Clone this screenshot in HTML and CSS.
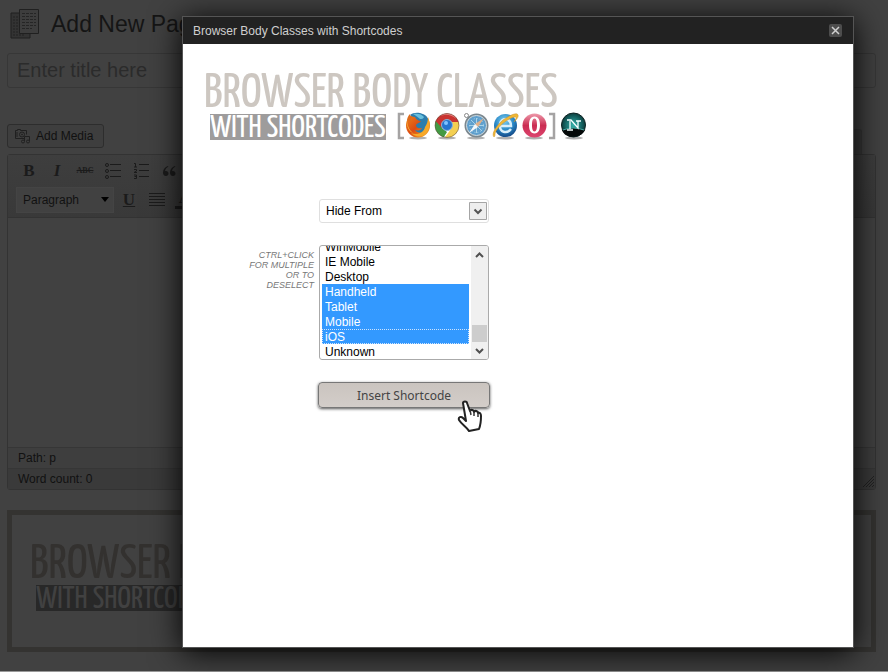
FILE: index.html
```html
<!DOCTYPE html>
<html lang="en">
<head>
<meta charset="utf-8">
<title>Add New Page</title>
<link rel="stylesheet" href="styles.css">
</head>
<body>
<main class="page">
  <header class="page-head">
    <svg width="30" height="32" viewBox="0 0 30 32" aria-hidden="true">
      <path d="M1 5h19v25H1z" fill="#333" stroke="#202020"/>
      <path d="M3 9h5M3 12h5M3 15h5M3 18h5M3 21h5M3 24h12M3 27h12" stroke="#222" stroke-dasharray="2 1"/>
      <path d="M9.500 1.500h19v24h-19z" fill="#3d3d3d" stroke="#202020"/>
      <path d="M12 5.500h14M12 8.500h14M12 11.500h14M12 14.500h14M12 17.500h14M12 20.500h10" stroke="#252525" stroke-dasharray="3 1"/>
    </svg>
    <h1>Add New Page</h1>
  </header>
  <input class="title-input" type="text" aria-label="Title" placeholder="Enter title here">
  <div class="media-row">
    <button class="media-btn" type="button">
      <svg width="16" height="16" viewBox="0 0 16 16" fill="none" stroke="#202020" aria-hidden="true">
        <path d="M9.500 10.500h-9v-8h2v-1h3v1h6v4"/><circle cx="7" cy="6.500" r="2.500"/><circle cx="7" cy="6.500" r=".5"/><path d="M2 4v5M9.500 13v-4.500h5V13"/><circle cx="8" cy="13.500" r="1.500"/><circle cx="13" cy="13.500" r="1.500"/>
      </svg>
      Add Media
    </button>
    <span class="tab"></span>
  </div>
  <section class="editor">
    <div class="toolbar">
      <div class="tools">
        <button class="tool serif" type="button">B</button>
        <button class="tool serif italic" type="button">I</button>
        <button class="tool strike" type="button">ABC</button>
        <button class="tool" type="button" aria-label="Bulleted list"><svg width="16" height="16" viewBox="0 0 16 16" fill="none" stroke="#1b1b1b"><circle cx="2" cy="2" r="1.500"/><circle cx="2" cy="8" r="1.500"/><circle cx="2" cy="14" r="1.500"/><path d="M5 1.500h11M5 7.500h11M5 13.500h11"/></svg></button>
        <button class="tool" type="button" aria-label="Numbered list"><svg width="16" height="16" viewBox="0 0 16 16" fill="none" stroke="#1b1b1b"><path d="M1 .5h1.500V4M1 4h3M1 6.500h2.500v1.500L1 9.500h3M1 12h2.500v3.500H1M1.500 13.500h2M6 1.500h10M6 7.500h10M6 13.500h10"/></svg></button>
        <button class="tool" type="button" aria-label="Quote"><svg width="13" height="10" viewBox="0 0 13 10" fill="#1b1b1b"><path d="M5 0C2 1 0 3.500 0 6.500 0 8.500 1 10 3 10c1.500 0 2.500-1 2.500-2.500S4.500 5 3 5c-.4 0-.7 0-1 .2C2.300 3 3.500 1.500 5.300.7z"/><path d="M12 0C9 1 7 3.500 7 6.500 7 8.500 8 10 10 10c1.500 0 2.500-1 2.500-2.500S11.500 5 10 5c-.4 0-.7 0-1 .2.300-2.200 1.500-3.700 3.300-4.500z"/></svg></button>
      </div>
      <div class="tools">
        <button class="format" type="button">Paragraph<svg width="8" height="5" viewBox="0 0 8 5"><path d="M0 0h8L4 5z" fill="#000"/></svg></button>
        <button class="tool serif under" type="button">U</button>
        <button class="tool" type="button" aria-label="Justify"><svg width="16" height="14" viewBox="0 0 16 14" stroke="#1b1b1b"><path d="M0 .5h16M0 3.500h16M0 6.500h16M0 9.500h16M0 12.500h16"/></svg></button>
        <button class="tool serif color" type="button">A</button>
      </div>
    </div>
    <div class="canvas"></div>
    <div class="status">Path: p</div>
    <div class="status count">Word count: 0
      <svg width="12" height="12" viewBox="0 0 12 12" stroke="#222" aria-hidden="true"><path d="M1 12L12 1M4 12l8-8M7 12l5-5M10 12l2-2"/></svg>
    </div>
  </section>
  <section class="promo">
    <div class="logo logo-dark">
      <div class="logo-top">BROWSER BODY CLASSES</div>
      <div class="logo-row"><span class="logo-tag">WITH SHORTCODES</span></div>
    </div>
  </section>
  <div class="taskbar"></div>
</main>

<div class="modal" role="dialog" aria-labelledby="modal-title">
  <div class="modal-bar">
    <h2 id="modal-title">Browser Body Classes with Shortcodes</h2>
    <button class="close" type="button" aria-label="Close"><svg width="13" height="13" viewBox="0 0 13 13"><path d="M3 3l7 7M10 3l-7 7" stroke="#d0d0d0" stroke-width="1.500"/></svg></button>
  </div>
  <div class="modal-body">
    <div class="logo">
      <div class="logo-top">BROWSER BODY CLASSES</div>
      <div class="logo-row">
        <span class="logo-tag">WITH SHORTCODES</span>
        <svg class="browsers" width="192" height="30" viewBox="396 112 192 30" aria-hidden="true">
          <defs>
            <radialGradient id="blue" cx=".45" cy=".3" r=".7"><stop offset="0" stop-color="#7fd0f2"/><stop offset=".6" stop-color="#2685c4"/><stop offset="1" stop-color="#164b88"/></radialGradient>
            <linearGradient id="fox" x1="0" y1="0" x2="1" y2="1"><stop offset="0" stop-color="#ef8a1c"/><stop offset=".5" stop-color="#dc4b12"/><stop offset="1" stop-color="#f7b52b"/></linearGradient>
            <linearGradient id="red" x1="0" y1="0" x2="0" y2="1"><stop offset="0" stop-color="#ee9aab"/><stop offset=".5" stop-color="#cb2d52"/><stop offset="1" stop-color="#dd4570"/></linearGradient>
            <radialGradient id="teal" cx=".5" cy=".5" r=".6"><stop offset="0" stop-color="#35b3ac"/><stop offset=".6" stop-color="#14605f"/><stop offset="1" stop-color="#082525"/></radialGradient>
            <clipPath id="disc"><circle cx="447" cy="125.500" r="12"/></clipPath>
          </defs>
          <path d="M404 114h-5v24h5M549 114h5v24h-5" fill="none" stroke="#a5a3a3" stroke-width="2.500"/>
          <g fill="#000" opacity=".3"><ellipse cx="418" cy="138" rx="9" ry="1.500"/><ellipse cx="447" cy="138" rx="9" ry="1.500"/><ellipse cx="476" cy="138" rx="9" ry="1.500"/><ellipse cx="505" cy="138" rx="9" ry="1.500"/><ellipse cx="534" cy="138" rx="9" ry="1.500"/><ellipse cx="574" cy="138" rx="9" ry="1.500"/></g>
          <circle cx="418" cy="125.500" r="12" fill="url(#fox)"/>
          <path d="M410 115c5-4 14-2 17 2 3 5 2 11-1 14-4 3-9 2-11-1 4 1 6 0 7-2-4 1-6-1-6-3 1-2 4-2 5-4-3 0-5-2-6-4-2 0-4-1-5-2z" fill="#2c7dad"/>
          <path d="M413 114c4-1 9 0 11 3-1 2-2 2-4 2-2-2-4-3-7-5z" fill="#68c0dd"/>
          <path d="M428 117c3 7 2 15-5 19-5 1-9 0-12-3 7 3 13-1 14-6 2-3 3-6 3-10z" fill="#f7a928"/><path d="M407 120c0 5 2 10 6 13-4-1-7-8-6-13z" fill="#fbc544"/>
          <path d="M407 121c0-3 1-5 3-7 0 2 1 3 2 3-2 2-2 3-1 5-2-1-3-2-4-1z" fill="#dd6b1b"/>
          <g clip-path="url(#disc)"><path d="M434 112h26v14h-13l-7 3-6-8z" fill="#c93431"/><path d="M434 119l8 9 5 4-5 8h-8z" fill="#429a43"/><path d="M452 122h9v18h-18l8-11z" fill="#f3cf52"/><path d="M436 117q11-7 21 1" stroke="#eb8582" stroke-width="2" fill="none"/></g>
          <circle cx="447" cy="125.500" r="12" fill="none" stroke="#513a23" stroke-opacity=".5"/>
          <circle cx="447" cy="125" r="5.500" fill="#2675cf" stroke="#8fb4d5"/><circle cx="446" cy="123" r="2" fill="#7fc2ff"/>
          <circle cx="466.500" cy="115.500" r="2" fill="none" stroke="#888"/><circle cx="476.500" cy="125.500" r="11" fill="#5f9fcd" stroke="#7b878e" stroke-width="2"/><circle cx="476.500" cy="125.500" r="10" fill="none" stroke="#d0dbe0"/><circle cx="476.500" cy="125.500" r="7" fill="none" stroke="#a9d3e8" stroke-dasharray="1 2"/>
          <path d="M476.500 118v15M469 125.500h15M471 120l11 11" stroke="#a9d3e8"/><path d="M484 118l-6 9-3-3z" fill="#e0b089"/><path d="M469 133l6-9 3 3z" fill="#f5f7f9"/>
          <circle cx="505.500" cy="125.500" r="11.500" fill="url(#blue)"/>
          <path d="M500 126h11c0-8-10-9-11-2-1 9 7 10 11 5" fill="none" stroke="#d9effa" stroke-width="2.500"/>
          <path d="M494 137c-3-3 2-11 9-17 7-5 14-8 15-5 1 2-2 5-4 7 2-3 3-5 1-5-6 0-20 12-20 17 0 1 0 2-1 3z" fill="#f0b735" stroke="#c9902a" stroke-width=".5"/>
          <circle cx="534.500" cy="125.500" r="12" fill="url(#red)"/><path fill-rule="evenodd" d="M534.500 116.500c4 0 5.500 4 5.500 8.500s-1.500 8.500-5.500 8.500-5.500-4-5.500-8.500 1.500-8.500 5.500-8.500zm0 2c-2 0-2.500 3-2.500 6.500s.5 6.500 2.500 6.500 2.500-3 2.500-6.500-.5-6.500-2.500-6.500z" fill="#fff"/>
          <circle cx="573.500" cy="125" r="12" fill="url(#teal)" stroke="#102424"/><path d="M562 130q11-4 23 0c-3 8-20 10-23 0z" fill="#050909"/><path d="M563 130q10-4 21 0" fill="none" stroke="#4bb3ad"/>
          <path d="M567 120h4l7 8v-7h-2M578 121h3M570 121v8M567 130h6" fill="none" stroke="#f5ffff" stroke-width="1.300"/>
        </svg>
      </div>
    </div>
    <form class="form">
      <span></span>
      <div class="drop">
        <select aria-label="Visibility"><option>Hide From</option></select>
        <svg class="drop-arrow" width="18" height="18" viewBox="0 0 18 18" aria-hidden="true"><path d="M.5.5h17v17H.5z" fill="#eee" stroke="#a5a5a5"/><path d="M5.500 7.500L9 11l3.500-3.500" fill="none" stroke="#555" stroke-width="2"/></svg>
      </div>
      <label class="hint" for="targets">CTRL+CLICK<br>FOR MULTIPLE<br>OR TO<br>DESELECT</label>
      <div class="list">
        <select id="targets" multiple size="7">
          <option>WinMobile</option>
          <option>IE Mobile</option>
          <option>Desktop</option>
          <option selected>Handheld</option>
          <option selected>Tablet</option>
          <option selected>Mobile</option>
          <option selected class="current">iOS</option>
          <option>Unknown</option>
        </select>
        <div class="scroll" aria-hidden="true">
          <svg width="9" height="6" viewBox="0 0 9 6"><path d="M1 5l3.500-3.500L8 5" fill="none" stroke="#505050" stroke-width="2"/></svg>
          <span class="thumb"></span>
          <svg width="9" height="6" viewBox="0 0 9 6"><path d="M1 1l3.500 3.500L8 1" fill="none" stroke="#505050" stroke-width="2"/></svg>
        </div>
      </div>
      <span></span>
      <div class="submit">
        <button type="button">Insert Shortcode</button>
        <svg class="hand" width="26" height="32" viewBox="0 0 26 32" aria-hidden="true"><path d="M6 3c0-2 4-2 4 0l3 8c1-2 4-1 4 1 1-2 4-1 4 1 2-1 3 1 3 3 0 5 0 8-2 13l-10 2c-2-4-7-6-10-11-1-3 2-4 4-2l3 3z" fill="#fff" stroke="#222" stroke-width="2" stroke-linejoin="round"/><path d="M13 10l1 5M17 12v4M21 13v4" stroke="#333" stroke-width="1.500" fill="none"/></svg>
      </div>
    </form>
  </div>
</div>
<script src="list.js"></script>
</body>
</html>
```
FILE: styles.css
```css
* { box-sizing: border-box; }
body {
  margin: 0;
  background: #414141;
  color: #111;
  font: 12px/16px "Liberation Sans", Arial, sans-serif;
}
button, input, select { font: inherit; color: inherit; margin: 0; }
button { padding: 0; border: 0; background: none; }
.page { display: flex; flex-direction: column; min-height: 100vh; overflow: hidden; }
.page > * { margin-left: 7px; margin-right: 12px; }
.page-head { display: flex; align-items: center; gap: 11px; padding: 8px 3px 0; height: 40px; }
h1 { margin: 0; font-size: 23px; line-height: 32px; font-weight: 400; color: #151515; }
.title-input {
  margin-top: 13px;
  height: 35px;
  padding: 0 9px;
  border: 1px solid #373737;
  border-radius: 3px;
  background: #414141;
  font-size: 20px;
}
.title-input::placeholder { color: #2b2b2b; opacity: 1; }
.media-row { display: flex; justify-content: space-between; margin-top: 36px; height: 30px; padding-right: 14px; }
.media-btn {
  display: flex;
  align-items: center;
  gap: 5px;
  height: 24px;
  padding: 0 10px 0 7px;
  border: 1px solid #2d2d2d;
  border-radius: 3px;
  background: #3e3e3e;
}
.tab { width: 48px; margin-top: 5px; border: 1px solid #373737; border-bottom: 0; border-radius: 3px 3px 0 0; background: #3b3b3b; }
.editor { border: 1px solid #333; border-radius: 3px; }
.toolbar { height: 63px; padding: 1px 7px; border-bottom: 1px solid #333; background: linear-gradient(#3e3e3e, #393939); }
.tools { display: flex; align-items: center; height: 29px; }
.tool { display: flex; justify-content: center; align-items: center; flex: none; width: 28px; height: 24px; color: #1b1b1b; }
.serif { font: bold 17px/20px "Liberation Serif", serif; }
.italic { font-style: italic; }
.strike { font: bold 8px/10px "Liberation Serif", serif; text-decoration: line-through; }
.under { text-decoration: underline; }
.color { border-bottom: 3px solid #1b1b1b; width: 20px; margin-left: 4px; height: 18px; }
.format { display: flex; justify-content: space-between; align-items: center; flex: none; width: 98px; height: 26px; padding: 0 4px 0 6px; margin: 0 1px 0 1px; border: 1px solid #444; background: #414141; }
.canvas { height: 229px; }
.status { height: 21px; padding: 2px 10px; border-top: 1px solid #363636; background: #3e3e3e; }
.count { display: flex; justify-content: space-between; align-items: flex-start; padding-right: 1px; background: #3a3a3a; }
.count svg { align-self: flex-end; }
.promo { margin-top: 20px; height: 142px; padding: 30px 18px; border: 5px solid #343331; overflow: hidden; }
.page > .taskbar { margin: auto 0 0; height: 1px; background: #999; }

.logo { color: #cdc7c1; font-family: "Yanone Kaffeesatz", "Open Sans Condensed", "Roboto Condensed", "Liberation Sans Narrow", "Liberation Sans", sans-serif; white-space: nowrap; }
.logo-top { font-size: 49px; line-height: 40px; }
.logo-row { display: flex; align-items: center; gap: 10px; height: 26px; padding-left: 6px; }
.logo-tag { width: 176px; height: 26px; background: #9e9c9c; color: #fff; font-size: 32px; line-height: 28px; text-align: center; }
.logo-dark { color: #33312f; }
.logo-dark .logo-tag { background: #282828; color: #414141; }

.modal {
  position: absolute;
  left: 182px;
  right: 34px;
  top: 16px;
  bottom: 24px;
  display: flex;
  flex-direction: column;
  border: 1px solid #555;
  background: #fff;
  box-shadow: 0 4px 30px #000;
}
.modal-bar { display: flex; justify-content: space-between; align-items: center; height: 27px; padding: 0 11px 0 10px; background: #222; color: #cfcfcf; }
h2 { margin: 0; font-size: 12px; line-height: 16px; font-weight: 400; }
.close { display: flex; border-radius: 2px; background: #4d4d4d; }
.modal-body { padding: 30px 21px; }
.form { display: grid; grid-template-columns: 110px 172px; column-gap: 4px; row-gap: 22px; margin-top: 59px; color: #000; }
.drop, .list, .submit { position: relative; }
.drop, .list { width: 170px; margin-left: 1px; }
.drop select { display: block; appearance: none; width: 100%; height: 24px; padding: 0 6px; border: 1px solid #dfdfdf; border-radius: 3px; background: #fff; }
.drop-arrow { position: absolute; right: 2px; top: 3px; pointer-events: none; }
.hint { padding-top: 5px; font-size: 9px; line-height: 10px; font-style: italic; text-align: right; color: #777; }
.list { display: flex; height: 115px; border: 1px solid #aaa; border-radius: 3px; padding-left: 2px; overflow: hidden; }
.list select { flex: 1; height: 113px; padding: 0; border: 0; outline: 0; background: #fff; overflow-y: scroll; scrollbar-width: none; }
.list option { height: 15px; min-height: 15px; padding: 1px 3px 0; line-height: 15px; }
.list option:checked { background: #39f linear-gradient(#39f, #39f); color: #fff; }
.list .current { outline: 1px dotted #cde4ff; outline-offset: -1px; }
.scroll { display: flex; flex-direction: column; align-items: center; width: 17px; margin-left: 2px; padding: 6px 0 5px; background: #f0f0f0; }
.thumb { width: 15px; height: 17px; margin: auto 0 6px; background: #cdcdcd; }
.submit button {
  display: block;
  width: 172px;
  height: 26px;
  padding-top: 1px;
  border: 1px solid #777;
  border-radius: 4px;
  background: linear-gradient(#cac4bf, #d3cdc9);
  box-shadow: 0 1px 3px #555;
  color: #444;
  font: 12px/20px "Noto Sans", "Open Sans", sans-serif;
}
.hand { position: absolute; left: 139px; top: 18px; pointer-events: none; }
```
FILE: list.js
```js
// Open the list at its last entries.
const targets = document.getElementById("targets");
targets.scrollTop = targets.scrollHeight;
```
